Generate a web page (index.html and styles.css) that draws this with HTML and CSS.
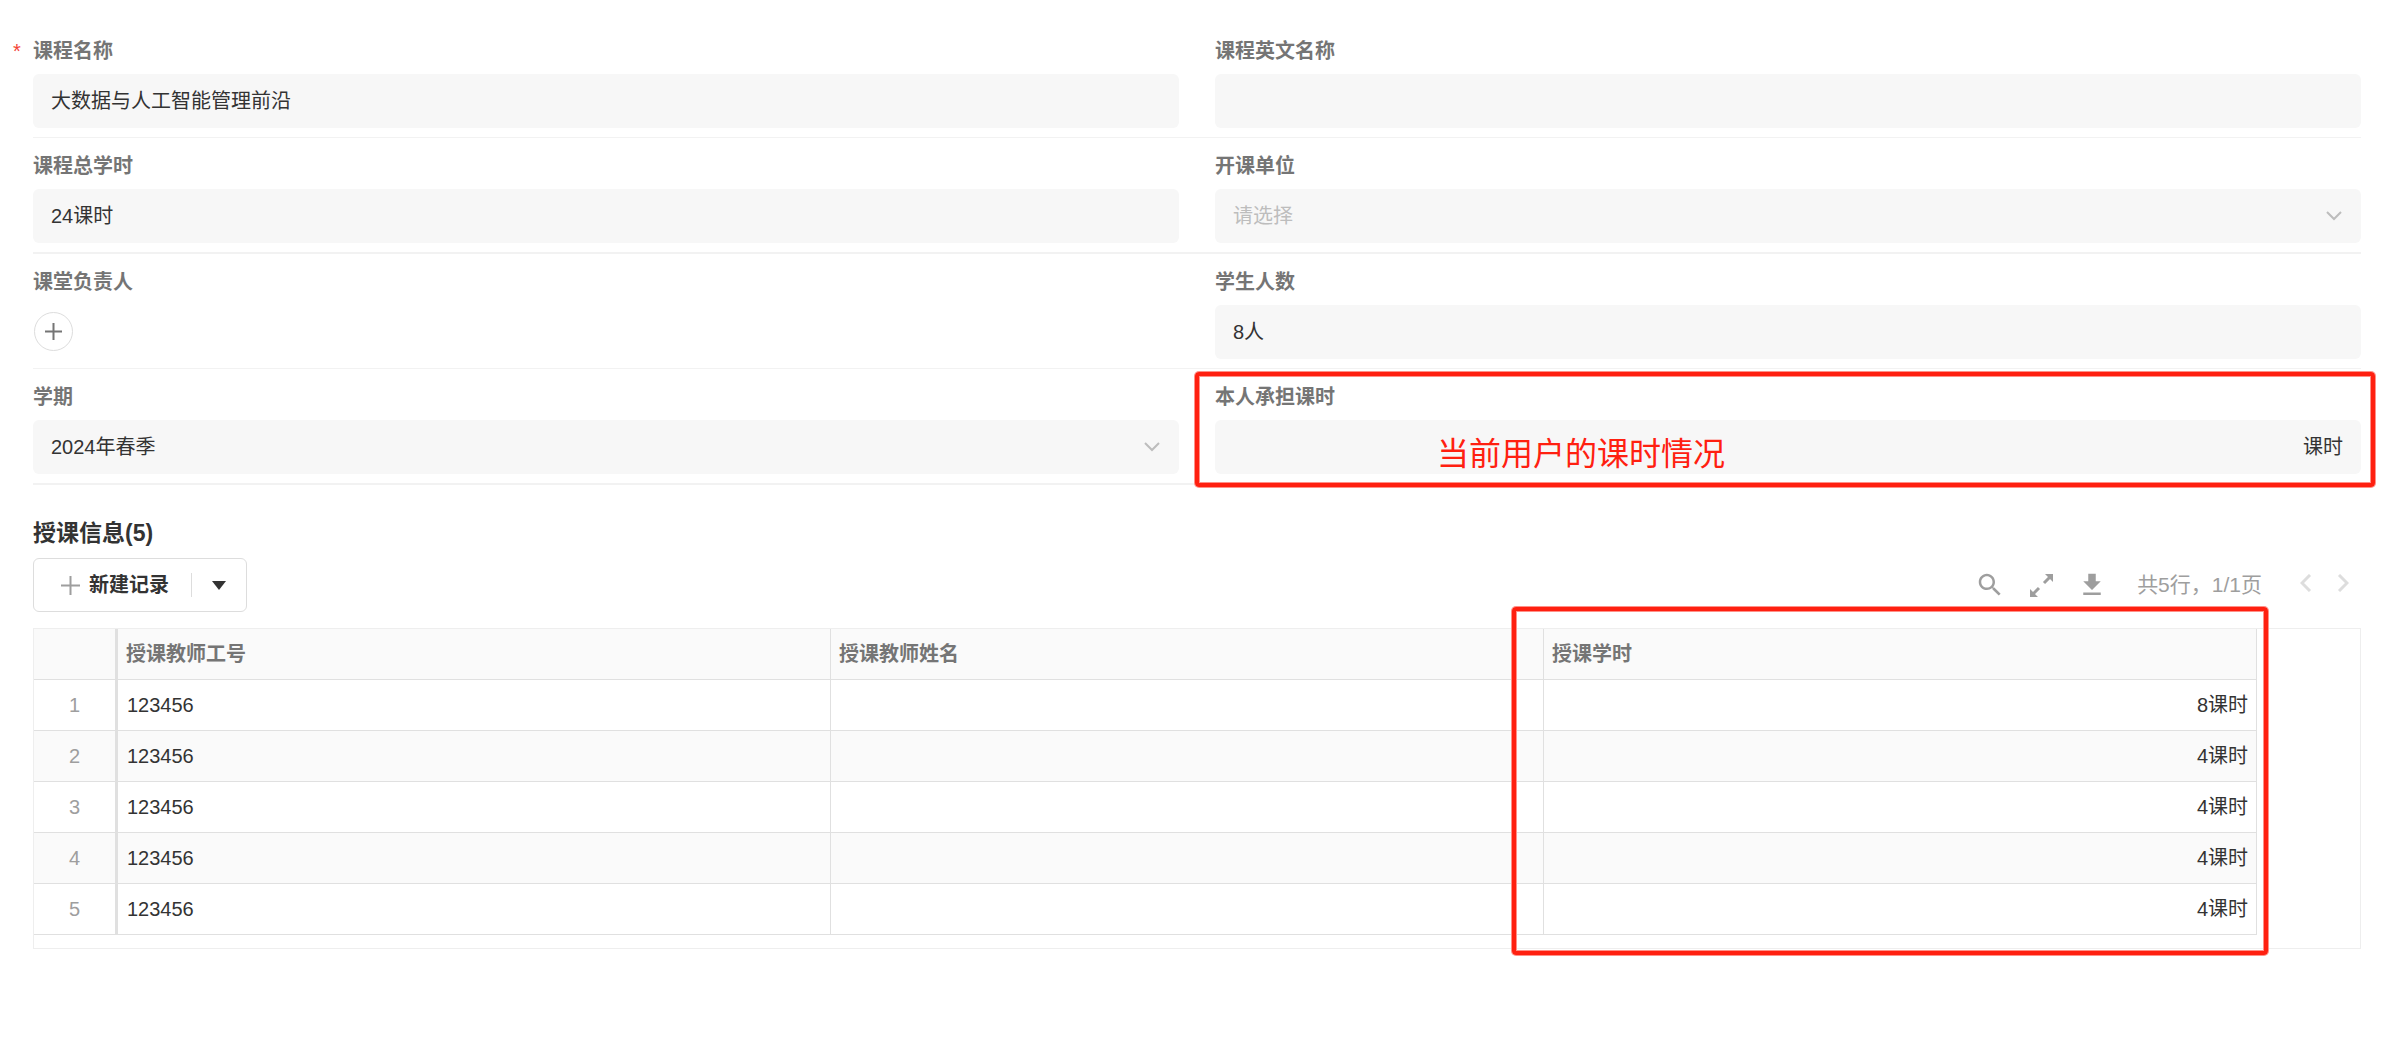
FILE: index.html
```html
<!DOCTYPE html>
<html lang="zh-CN">
<head>
    <meta charset="UTF-8">
    <meta name="viewport" content="width=device-width, initial-scale=1">
    <title>课程信息</title>
    <link rel="stylesheet" href="styles.css">
</head>
<body>
    <main class="page">
        <form class="form">
            <div class="form-row">
                <div class="field required">
                    <label for="course-name">课程名称</label>
                    <input class="control" type="text" id="course-name" value="大数据与人工智能管理前沿">
                </div>
                <div class="field">
                    <label for="course-name-en">课程英文名称</label>
                    <input class="control" type="text" id="course-name-en">
                </div>
            </div>
            <div class="form-row">
                <div class="field">
                    <label for="total-hours">课程总学时</label>
                    <input class="control" type="text" id="total-hours" value="24课时">
                </div>
                <div class="field">
                    <label for="department">开课单位</label>
                    <div class="select-box">
                        <select class="control empty" id="department">
                            <option value="">请选择</option>
                        </select>
                        <svg class="chevron" viewBox="0 0 16 10"><path d="M1 1l7 7 7-7"/></svg>
                    </div>
                </div>
            </div>
            <div class="form-row">
                <div class="field">
                    <label for="add-owner">课堂负责人</label>
                    <div class="member-box">
                        <button class="add-member" type="button" id="add-owner" aria-label="添加课堂负责人">
                            <svg viewBox="0 0 17 17"><path d="M8.5 0v17M0 8.5h17"/></svg>
                        </button>
                    </div>
                </div>
                <div class="field">
                    <label for="students">学生人数</label>
                    <input class="control" type="text" id="students" value="8人">
                </div>
            </div>
            <div class="form-row">
                <div class="field">
                    <label for="term">学期</label>
                    <div class="select-box">
                        <select class="control" id="term">
                            <option>2024年春季</option>
                        </select>
                        <svg class="chevron" viewBox="0 0 16 10"><path d="M1 1l7 7 7-7"/></svg>
                    </div>
                </div>
                <div class="field">
                    <label for="my-hours">本人承担课时</label>
                    <div class="control unit-box">
                        <input type="text" id="my-hours">
                        <span>课时</span>
                    </div>
                    <div class="mark mark-field"></div>
                    <div class="mark-text">当前用户的课时情况</div>
                </div>
            </div>
        </form>

        <section class="records">
            <h2 class="records-title">授课信息(5)</h2>
            <div class="toolbar">
                <div class="split-button">
                    <button class="new-record" type="button">
                        <svg viewBox="0 0 19 19"><path d="M9.5 0v19M0 9.5h19"/></svg>
                        新建记录
                    </button>
                    <button class="more" type="button" aria-label="更多">
                        <svg viewBox="0 0 14 9"><path d="M0 0h14L7 9z"/></svg>
                    </button>
                </div>
                <div class="tools">
                    <button class="tool" type="button" aria-label="搜索">
                        <svg viewBox="0 0 24 24"><path d="M15.5 14h-.79l-.28-.27C15.41 12.59 16 11.11 16 9.5 16 5.91 13.09 3 9.5 3S3 5.91 3 9.5 5.91 16 9.5 16c1.61 0 3.09-.59 4.23-1.57l.27.28v.79l5 4.99L20.49 19l-4.99-5zm-6 0C7.01 14 5 11.99 5 9.5S7.01 5 9.5 5 14 7.01 14 9.5 11.99 14 9.5 14z"/></svg>
                    </button>
                    <button class="tool" type="button" aria-label="全屏">
                        <svg viewBox="0 0 30 30">
                            <path d="M19 4h8v8zM4 19v8h8z"/>
                            <path class="shaft" d="M25 6l-7 7M6 25l7-7"/>
                        </svg>
                    </button>
                    <button class="tool" type="button" aria-label="下载">
                        <svg viewBox="0 0 24 24"><path d="M19 9h-4V3H9v6H5l7 7 7-7zM5 18v2h14v-2H5z"/></svg>
                    </button>
                    <span class="page-info">共5行，1/1页</span>
                    <button class="pager" type="button" aria-label="上一页">
                        <svg viewBox="0 0 12 18"><path d="M10 1L2 9l8 8"/></svg>
                    </button>
                    <button class="pager" type="button" aria-label="下一页">
                        <svg viewBox="0 0 12 18"><path d="M2 1l8 8-8 8"/></svg>
                    </button>
                </div>
            </div>
            <div class="grid">
                <table>
                    <thead>
                        <tr>
                            <th class="num"></th>
                            <th>授课教师工号</th>
                            <th>授课教师姓名</th>
                            <th class="marked">授课学时<div class="mark mark-column"></div></th>
                        </tr>
                    </thead>
                    <tbody>
                        <tr><td class="num">1</td><td>123456</td><td></td><td class="hours">8课时</td></tr>
                        <tr><td class="num">2</td><td>123456</td><td></td><td class="hours">4课时</td></tr>
                        <tr><td class="num">3</td><td>123456</td><td></td><td class="hours">4课时</td></tr>
                        <tr><td class="num">4</td><td>123456</td><td></td><td class="hours">4课时</td></tr>
                        <tr><td class="num">5</td><td>123456</td><td></td><td class="hours">4课时</td></tr>
                    </tbody>
                </table>
            </div>
        </section>
    </main>
</body>
</html>
```
FILE: styles.css
```css
* {
    box-sizing: border-box;
}
body {
    margin: 0;
    background: #fff;
    color: #333;
    font-family: "Liberation Sans", "Noto Sans CJK SC", sans-serif;
    font-size: 20px;
    line-height: 30px;
}
button,
input,
select {
    font: inherit;
    color: inherit;
}
button {
    display: flex;
    align-items: center;
    justify-content: center;
    padding: 0;
    border: none;
    background: none;
    cursor: pointer;
}
.page {
    padding: 23px 28px 40px 33px;
}

/* form */
.form-row {
    display: grid;
    grid-template-columns: 1fr 1fr;
    column-gap: 36px;
    padding: 13px 0 9px;
    border-bottom: 1px solid #f2f2f2;
}
.form-row:nth-child(even) {
    border-bottom-width: 2px;
}
.field {
    position: relative;
    display: flex;
    flex-direction: column;
    gap: 8px;
}
.field label {
    color: #757575;
    font-weight: bold;
}
.required::before {
    content: "*";
    position: absolute;
    left: -20px;
    color: #f44336;
}
.control {
    width: 100%;
    height: 54px;
    padding: 0 18px;
    border: none;
    border-radius: 6px;
    background: #f7f7f7;
    outline: none;
}
input.control {
    padding-bottom: 4px;
}
.select-box {
    position: relative;
    display: flex;
}
.select-box select {
    appearance: none;
}
.empty {
    color: #bdbdbd;
}
.chevron {
    position: absolute;
    top: 22px;
    right: 19px;
    width: 16px;
    height: 10px;
    fill: none;
    stroke: #bdbdbd;
    stroke-width: 2;
}
.member-box {
    display: flex;
    align-items: center;
    height: 54px;
    padding: 0 1px 2px;
}
.add-member {
    width: 39px;
    height: 39px;
    border: 1px solid #ddd;
    border-radius: 50%;
}
.add-member svg {
    width: 17px;
    height: 17px;
    stroke: #757575;
    stroke-width: 2;
}
.unit-box {
    display: flex;
    align-items: center;
}
.unit-box input {
    flex: 1;
    min-width: 0;
    border: none;
    background: none;
    outline: none;
}

/* red marks */
.mark {
    position: absolute;
    border: 4px solid #ff2010;
    border-radius: 4px;
    box-shadow: 0 0 0 1px #ff9088, inset 0 0 0 1px #ff9088;
    pointer-events: none;
}
.mark-field {
    inset: -10px -14px -13px -20px;
}
.mark-text {
    position: absolute;
    top: 52px;
    left: 222px;
    color: #ff2010;
    font-size: 32px;
    line-height: 40px;
}
.mark-column {
    top: -22px;
    left: -32px;
    right: -12px;
    height: 348px;
}

/* records */
.records-title {
    margin: 31px 0 8px;
    font-size: 23px;
    line-height: 34px;
}
.toolbar {
    display: flex;
    align-items: center;
    justify-content: space-between;
    margin-bottom: 16px;
}
.split-button {
    display: flex;
    align-items: center;
    height: 54px;
    border: 1px solid #ddd;
    border-radius: 6px;
}
.new-record {
    gap: 9px;
    height: 24px;
    padding: 0 22px 0 27px;
    border-right: 1px solid #ddd;
    font-weight: bold;
}
.new-record svg {
    width: 19px;
    height: 19px;
    stroke: #9e9e9e;
    stroke-width: 2;
}
.more {
    width: 54px;
    height: 52px;
}
.more svg {
    width: 14px;
    height: 9px;
    fill: #333;
}
.tools {
    display: flex;
    align-items: center;
    color: #9e9e9e;
}
.tool {
    margin-right: 21px;
}
.tool svg {
    width: 30px;
    height: 30px;
    fill: #9e9e9e;
}
.tool .shaft {
    stroke: #9e9e9e;
    stroke-width: 3;
}
.page-info {
    margin: 0 25px 0 9px;
    font-size: 21px;
}
.pager {
    width: 37px;
    height: 34px;
    padding-bottom: 4px;
}
.pager svg {
    width: 12px;
    height: 18px;
    fill: none;
    stroke: #ddd;
    stroke-width: 3;
}
.grid {
    padding: 0 103px 13px 0;
    border: 1px solid #eee;
}
table {
    width: 100%;
    table-layout: fixed;
    border-collapse: separate;
    border-spacing: 0;
}
th,
td {
    height: 51px;
    padding: 0 8px;
    border-right: 1px solid #e0e0e0;
    border-bottom: 1px solid #e0e0e0;
    text-align: left;
}
th {
    background: #fafafa;
    color: #757575;
}
td {
    padding-left: 9px;
}
tbody tr:nth-child(even) {
    background: #fafafa;
}
.num {
    width: 84px;
    padding: 0 8px;
    border-right: 3px solid #e0e0e0;
    color: #9e9e9e;
    text-align: center;
}
.hours {
    text-align: right;
}
.marked {
    position: relative;
}
```
